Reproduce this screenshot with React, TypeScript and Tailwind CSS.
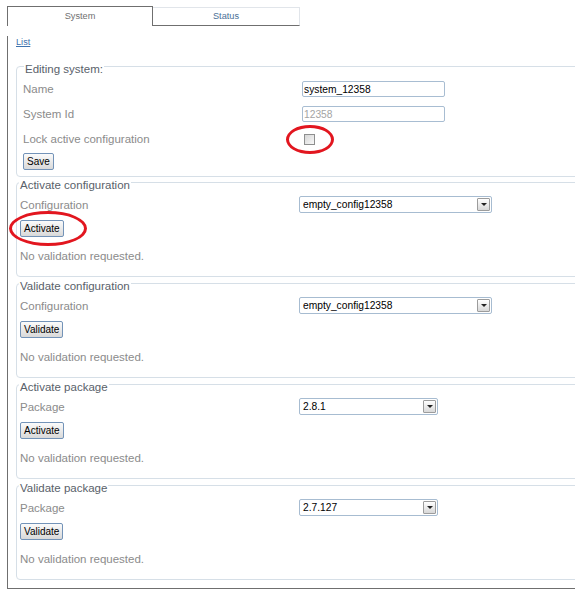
import React from 'react'

// Old-style "edit system" admin page: tabs + stacked fieldsets

const labelCls = 'text-[11.5px] leading-[14px] text-[#8b8b8b]'

function Legend({ title, indent }: { title: string; indent: string }) {
  return (
    <legend className={`pt-[6px] px-[1px] leading-[14px] text-[11.5px] text-[#59616a] ${indent}`}>
      {title}
    </legend>
  )
}

function Btn({ children }: { children: React.ReactNode }) {
  return (
    <button
      type="button"
      className="h-[17px] px-[3px] border border-[#7393b8] rounded-[2px] bg-linear-to-b from-[#fbfbfb] to-[#d9d9d9] text-[10px] leading-[15px] text-black"
    >
      {children}
    </button>
  )
}

function FakeSelect({ value, width }: { value: string; width: string }) {
  return (
    <div className={`${width} h-[17px] border border-[#a7bcd1] rounded-[2px] bg-white flex items-center pl-[3px] pr-[1px]`}>
      <span className="flex-1 text-[10.25px] leading-[15px] text-black">{value}</span>
      <span className="w-[13px] h-[13px] border border-[#9c9c9c] rounded-[1px] bg-linear-to-b from-white to-[#d8d8d8] flex items-center justify-center">
        <span className="w-0 h-0 border-l-[3px] border-r-[3px] border-t-[3px] border-l-transparent border-r-transparent border-t-[#222]" />
      </span>
    </div>
  )
}

function ActionBox({
  title,
  label,
  value,
  selectWidth,
  action,
  circled,
  className,
}: {
  title: string
  label: string
  value: string
  selectWidth: string
  action: string
  circled?: boolean
  className: string
}) {
  return (
    <fieldset className={`border border-[#d6dfe7] rounded-[4px] min-w-0 ${className}`}>
      <Legend title={title} indent="ml-[2px]" />
      <div className="pl-[3px] pt-[4px] pb-[13px]">
        <div className="grid grid-cols-[279px_auto] items-center h-[17px]">
          <span className={labelCls}>{label}</span>
          <FakeSelect value={value} width={selectWidth} />
        </div>
        <div className="mt-[7px] flex">
          <div className="relative flex">
            <Btn>{action}</Btn>
            {circled && (
              <span className="absolute -left-[11px] -top-[9px] w-[78px] h-[35px] border-[3px] border-[#e2161f] rounded-[50%] pointer-events-none" />
            )}
          </div>
        </div>
        <p className={`mt-[12px] ${labelCls}`}>No validation requested.</p>
      </div>
    </fieldset>
  )
}

export default function App() {
  return (
    <div className="h-[600px] w-[575px] overflow-hidden bg-white flex font-['Liberation_Sans',Arial,sans-serif]">
      <div className="ml-[2px] w-px self-stretch bg-[#a9c4dd]" />

      <div className="ml-[5px] pt-[6px]">
        {/* tabs */}
        <div className="flex">
          <div className="w-[146px] h-[20px] border-t border-x border-[#6f6f6f] bg-white text-center text-[9.2px] leading-[18px] text-[#707070]">
            System
          </div>
          <div className="w-[147px] h-[19px] mt-[1px] border-t border-r border-b border-t-[#e1e5ea] border-r-[#e1e5ea] border-b-[#6f6f6f] text-center text-[9.2px] leading-[17px] text-[#4a6f96]">
            Status
          </div>
        </div>

        {/* panel */}
        <div className="w-[700px] border-l border-b border-[#6f6f6f] pl-[8px] pb-[8px]">
          <a href="#" className="block mt-[10px] w-fit text-[9.2px] leading-[13px] text-[#3f72ad] underline">
            List
          </a>

          <fieldset className="mt-[7px] border border-[#d6dfe7] rounded-[4px] min-w-0">
            <Legend title="Editing system:" indent="ml-[7px]" />
            <div className="pl-[6px] pt-[5px] pb-[6px]">
              <div className="flex flex-col gap-[9px]">
                <div className="grid grid-cols-[279px_auto] items-center h-[16px]">
                  <span className={labelCls}>Name</span>
                  <input
                    readOnly
                    value="system_12358"
                    className="w-[143px] h-[16px] border border-[#a8bdd2] rounded-[2px] pl-[1px] text-[10.25px] leading-[14px] text-black outline-none"
                  />
                </div>
                <div className="grid grid-cols-[279px_auto] items-center h-[16px]">
                  <span className={labelCls}>System Id</span>
                  <input
                    disabled
                    value="12358"
                    className="w-[143px] h-[16px] border border-[#a8bdd2] rounded-[2px] pl-[1px] bg-white text-[10.25px] leading-[14px] text-[#a4a4a4]"
                  />
                </div>
                <div className="grid grid-cols-[279px_auto] items-center h-[16px]">
                  <span className={labelCls}>Lock active configuration</span>
                  <div className="relative ml-[2px] w-[11px] h-[11px]">
                    <div className="w-[11px] h-[11px] border border-[#8e8f8f] bg-linear-to-br from-[#d6d6d6] to-[#f8f8f8]" />
                    <span className="absolute -left-[18px] -top-[9px] w-[48px] h-[29px] border-[3px] border-[#e2161f] rounded-[50%] pointer-events-none" />
                  </div>
                </div>
              </div>
              <div className="mt-[6px] flex">
                <Btn>Save</Btn>
              </div>
            </div>
          </fieldset>

          <ActionBox
            className="-mt-[5px]"
            title="Activate configuration"
            label="Configuration"
            value="empty_config12358"
            selectWidth="w-[193px]"
            action="Activate"
            circled
          />
          <ActionBox
            className="-mt-[4px]"
            title="Validate configuration"
            label="Configuration"
            value="empty_config12358"
            selectWidth="w-[193px]"
            action="Validate"
          />
          <ActionBox
            className="-mt-[4px]"
            title="Activate package"
            label="Package"
            value="2.8.1"
            selectWidth="w-[139px]"
            action="Activate"
          />
          <ActionBox
            className="-mt-[4px]"
            title="Validate package"
            label="Package"
            value="2.7.127"
            selectWidth="w-[139px]"
            action="Validate"
          />
        </div>
      </div>
    </div>
  )
}
